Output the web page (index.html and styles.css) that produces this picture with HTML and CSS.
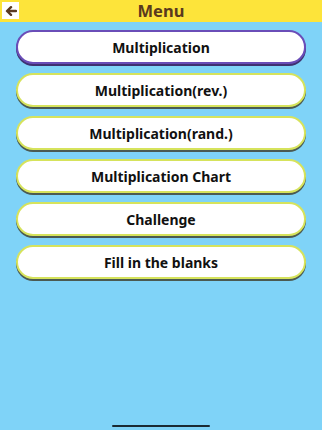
FILE: index.html
```html
<!DOCTYPE html>
<html>
<head>
<meta charset="utf-8">
<link rel="stylesheet" href="styles.css">
</head>
<body>
<div class="app">
  <header class="header">
    <button class="back" aria-label="Back">
      <svg width="12" height="10" viewBox="0 0 12 10"><path d="M11 5H2.5M6 1.2L2 5l4 3.8" fill="none" stroke="#5a3a22" stroke-width="2.4" stroke-linecap="round" stroke-linejoin="round"/></svg>
    </button>
    <h1 class="title">Menu</h1>
  </header>
  <main class="menu">
    <button class="item active">Multiplication</button>
    <button class="item">Multiplication(rev.)</button>
    <button class="item">Multiplication(rand.)</button>
    <button class="item">Multiplication Chart</button>
    <button class="item">Challenge</button>
    <button class="item">Fill in the blanks</button>
  </main>
  <div class="home-indicator"></div>
</div>
</body>
</html>
```
FILE: styles.css
```css
* { box-sizing: border-box; }
html, body { margin: 0; padding: 0; }
body {
  width: 322px;
  height: 430px;
  background: #7fd3f8;
  font-family: "Noto Sans", "DejaVu Sans", sans-serif;
  overflow: hidden;
}
.app {
  position: relative;
  height: 430px;
  display: flex;
  flex-direction: column;
}
.header {
  position: relative;
  height: 22px;
  background: #fde43a;
  display: flex;
  align-items: center;
  justify-content: center;
}
.back {
  position: absolute;
  left: 2px;
  top: 2px;
  width: 17px;
  height: 17px;
  padding: 0;
  border: none;
  background: #fff;
  display: flex;
  align-items: center;
  justify-content: center;
}
.title {
  margin: 0;
  font-size: 16.5px;
  font-weight: 700;
  color: #5a3a1e;
  line-height: 22px;
}
.menu {
  display: flex;
  flex-direction: column;
  gap: 9px;
  padding: 8px 16px 0 16px;
}
.item {
  height: 34px;
  width: 290px;
  border-radius: 17px;
  background: #fff;
  border: 2px solid #d6e35c;
  box-shadow: 0 2px 0 #4b5a52;
  font-family: "Noto Sans", "DejaVu Sans", sans-serif;
  font-size: 14px;
  font-weight: 700;
  color: #111;
  padding: 0;
}
.item.active {
  border: 2.5px solid #6a4db8;
  box-shadow: 0 2px 0 #3e3270;
}
.home-indicator {
  position: absolute;
  left: 112px;
  bottom: 3px;
  width: 98px;
  height: 2px;
  border-radius: 1px;
  background: #1a2a33;
}
```
